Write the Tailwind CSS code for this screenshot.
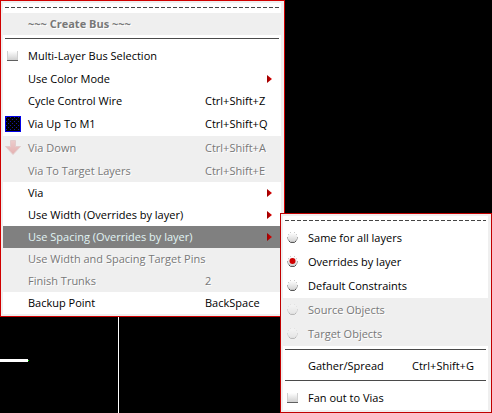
<!DOCTYPE html>
<html lang="en">
<head>
<meta charset="utf-8">
<title>Create Bus</title>
<script src="https://cdn.jsdelivr.net/npm/@tailwindcss/browser@4"></script>
</head>
<body class="bg-black">
<svg width="0" height="0" class="absolute">
  <defs>
    <linearGradient id="g" x1="0" y1="0" x2="0" y2="1"><stop offset="0" stop-color="#fff"/><stop offset="1" stop-color="#d0d0d0"/></linearGradient>
    <linearGradient id="r" x1="0" y1="0" x2="1" y2="0"><stop offset="0" stop-color="#900"/><stop offset="1" stop-color="#e00000"/></linearGradient>
    <linearGradient id="d" x1="0" y1="0" x2="0" y2="1"><stop offset="0" stop-color="#eccccc"/><stop offset="1" stop-color="#e4b0b0"/></linearGradient>
    <pattern id="dots" width="4" height="4" patternUnits="userSpaceOnUse"><rect width="4" height="4" fill="#000"/><path d="M1 1h1v1h-1zM3 3h1v1h-1z" fill="#1818a0"/></pattern>
    <symbol id="arrow" viewBox="0 0 5 8"><path d="M0 0L5 4L0 8Z" fill="url(#r)"/></symbol>
    <symbol id="check" viewBox="0 0 12 12"><rect x="0" y="1" width="11" height="9" fill="url(#g)"/><path d="M.5 1V10M10.5 1V10" stroke="#d0d0d0"/><path d="M0 10.5H11" stroke="#606060"/></symbol>
    <symbol id="radio" viewBox="0 0 12 12"><circle cx="5.5" cy="5.5" r="5" fill="url(#g)"/><path d="M.5 5V6.500L2 8.800M10.500 5V6.500L9 8.800" fill="none" stroke="#aaa"/><path d="M1.800 8.800L3.500 10.400H7.500L9.200 8.800" fill="none" stroke="#484848"/><path d="M3 0h1v1H3zM7 0h1v1H7zM1 2h1v1H1zM9 2h1v1H9z" fill="#ccc"/></symbol>
  </defs>
</svg>
<main class="relative w-[492px] h-[413px] overflow-hidden bg-black font-['Open_Sans','Noto_Sans',sans-serif] text-[11px] leading-[22px] text-black whitespace-nowrap">
  <div class="absolute left-0 top-[359px] w-[28px] h-[3px] bg-white"></div>
  <div class="absolute left-[28px] top-[360px] w-px h-px bg-[#00ff00]"></div>
  <div class="absolute left-[118px] top-[317px] w-px h-[96px] bg-white"></div>

  <section class="absolute left-0 top-0 w-[285px] h-[317px] border border-[#d00000] bg-[#efefef] p-[2px]">
    <div class="h-[10px] bg-white pt-[4px] pl-[2px] mr-px"><svg class="block" width="274" height="1"><path d="M0 .5H274" stroke="#444" stroke-dasharray="4 2"/></svg></div>
    <div class="w-[278px]">
      <div class="h-[22px] pl-[25px] font-bold text-[#787878] [text-shadow:1px_1px_0_#fff]">~~~ Create Bus ~~~</div>
      <div class="h-[9px] bg-white pt-[3px] px-[2px]"><div class="h-px bg-[#4a4a4a]"></div></div>
      <div class="h-[24px] bg-white flex items-center"><svg class="ml-[4px] mr-[9px]" width="12" height="12"><use href="#check"/></svg>Multi-Layer Bus Selection</div>
      <div class="h-[22px] bg-white flex items-center pl-[25px] pr-[9px] justify-between">Use Color Mode<svg width="5" height="8"><use href="#arrow"/></svg></div>
      <div class="h-[22px] bg-white flex items-center pl-[25px]"><span class="w-[177px]">Cycle Control Wire</span><span>Ctrl+Shift+Z</span></div>
      <div class="h-[24px] bg-white flex items-center pl-[2px]"><svg class="mr-[7px]" width="16" height="16"><rect x=".5" y=".5" width="15" height="15" fill="url(#dots)" stroke="#0000e8"/></svg><span class="w-[177px]">Via Up To M1</span><span>Ctrl+Shift+Q</span></div>
      <div class="h-[24px] flex items-center pl-[2px] text-[#787878] [text-shadow:1px_1px_0_#fff]"><svg class="mr-[7px]" width="16" height="16"><path d="M5.500 .5H10.500V6.500H15.500L8 14.500L.5 6.500H5.500Z" fill="url(#d)" stroke="#e2cccc"/></svg><span class="w-[177px]">Via Down</span><span>Ctrl+Shift+A</span></div>
      <div class="h-[22px] flex items-center pl-[25px] text-[#787878] [text-shadow:1px_1px_0_#fff]"><span class="w-[177px]">Via To Target Layers</span><span>Ctrl+Shift+E</span></div>
      <div class="h-[22px] bg-white flex items-center pl-[25px] pr-[9px] justify-between">Via<svg width="5" height="8"><use href="#arrow"/></svg></div>
      <div class="h-[22px] bg-white flex items-center pl-[25px] pr-[9px] justify-between">Use Width (Overrides by layer)<svg width="5" height="8"><use href="#arrow"/></svg></div>
      <div class="h-[22px] bg-[#808080] text-[#e0f4f4] flex items-center pl-[25px] pr-[9px] justify-between">Use Spacing (Overrides by layer)<svg width="5" height="8"><use href="#arrow"/></svg></div>
      <div class="h-[22px] pl-[25px] text-[#787878] [text-shadow:1px_1px_0_#fff]">Use Width and Spacing Target Pins</div>
      <div class="h-[22px] flex items-center pl-[25px] text-[#787878] [text-shadow:1px_1px_0_#fff]"><span class="w-[177px]">Finish Trunks</span><span>2</span></div>
      <div class="h-[22px] bg-white flex items-center pl-[25px]"><span class="w-[177px]">Backup Point</span><span>BackSpace</span></div>
    </div>
  </section>

  <section class="absolute left-[280px] top-[213px] w-[212px] h-[200px] border border-[#c00000] bg-[#efefef] p-[2px]">
    <div class="h-[10px] bg-white pt-[4px] pl-[2px] mr-px"><svg class="block" width="201" height="1"><path d="M0 .5H201" stroke="#444" stroke-dasharray="4 2"/></svg></div>
    <div class="w-[205px]">
      <div class="h-[24px] bg-white flex items-center"><svg class="ml-[4px] mr-[9px]" width="12" height="12"><use href="#radio"/></svg>Same for all layers</div>
      <div class="h-[24px] bg-white flex items-center"><svg class="ml-[4px] mr-[9px]" width="12" height="12"><use href="#radio"/><circle cx="5.500" cy="5" r="3" fill="#d00000"/></svg>Overrides by layer</div>
      <div class="h-[24px] bg-white flex items-center"><svg class="ml-[4px] mr-[9px]" width="12" height="12"><use href="#radio"/></svg>Default Constraints</div>
      <div class="h-[24px] flex items-center text-[#787878] [text-shadow:1px_1px_0_#fff]"><svg class="ml-[4px] mr-[9px] opacity-35" width="12" height="12"><use href="#radio"/></svg>Source Objects</div>
      <div class="h-[24px] flex items-center text-[#787878] [text-shadow:1px_1px_0_#fff]"><svg class="ml-[4px] mr-[9px] opacity-35" width="12" height="12"><use href="#radio"/></svg>Target Objects</div>
      <div class="h-[9px] bg-white pt-[3px] px-[2px]"><div class="h-px bg-[#4a4a4a]"></div></div>
      <div class="h-[22px] bg-white flex items-center pl-[25px]"><span class="w-[104px]">Gather/Spread</span><span>Ctrl+Shift+G</span></div>
      <div class="h-[9px] bg-white pt-[3px] px-[2px]"><div class="h-px bg-[#4a4a4a]"></div></div>
      <div class="h-[24px] bg-white flex items-center"><svg class="ml-[4px] mr-[9px]" width="12" height="12"><use href="#check"/></svg>Fan out to Vias</div>
    </div>
  </section>
</main>
</body>
</html>
